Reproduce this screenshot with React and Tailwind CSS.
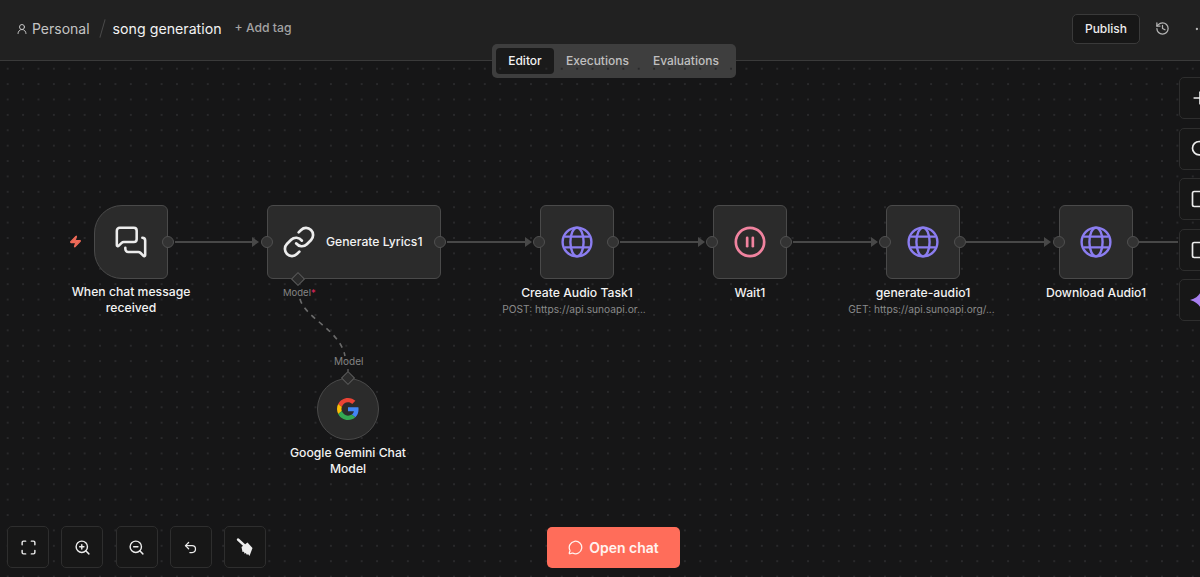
import { CirclePause, Ellipsis, History, Link, Maximize, MessageCircle, MessagesSquare, Plus, Search, Square, Undo2, UserRound, Zap, ZoomIn, ZoomOut } from "lucide-react";

function GlobeIcon() {
  return (
    <svg width="32" height="32" viewBox="0 0 32 32" fill="none" stroke="#8b7df0" strokeWidth="2.4">
      <circle cx="16" cy="16" r="14.4" />
      <ellipse cx="16" cy="16" rx="6.6" ry="14.4" />
      <path d="M3.4 10.6h25.2M3.4 21.4h25.2" />
    </svg>
  );
}

function GoogleIcon() {
  return (
    <svg width="22" height="22" viewBox="0 0 48 48">
      <path fill="#ea4335" d="M24 9.500c3.500 0 6.700 1.200 9.200 3.600l6.900-6.900C35.900 2.400 30.500 0 24 0 14.600 0 6.500 5.400 2.600 13.200l8 6.200C12.500 13.700 17.800 9.500 24 9.500z" />
      <path fill="#4285f4" d="M47 24.500c0-1.600-.1-3.100-.4-4.500H24v9h12.900c-.6 3-2.200 5.500-4.700 7.200l7.700 6C44.400 38.500 47 32 47 24.500z" />
      <path fill="#fbbc05" d="M10.500 28.600c-.5-1.400-.8-3-.8-4.600s.3-3.200.8-4.600l-8-6.200C.9 16.500 0 20.100 0 24s.9 7.500 2.600 10.800l7.900-6.200z" />
      <path fill="#34a853" d="M24 48c6.500 0 11.900-2.100 15.900-5.800l-7.700-6c-2.200 1.400-4.900 2.300-8.200 2.300-6.200 0-11.500-4.200-13.400-9.900l-8 6.200C6.500 42.600 14.600 48 24 48z" />
    </svg>
  );
}

function SparkleIcon() {
  return (
    <svg width="24" height="24" viewBox="0 0 24 24" fill="#a87ff0">
      <path d="M12 0c1.500 6 4 9.500 12 12-8 2.500-10.500 6-12 12-1.500-6-4-9.500-12-12 8-2.500 10.500-6 12-12z" />
    </svg>
  );
}

function BroomIcon() {
  return (
    <svg width="20" height="20" viewBox="0 0 20 20" fill="#ececec">
      <path d="M3 2.500l6 5.500" stroke="#ececec" strokeWidth="2.400" strokeLinecap="round" />
      <path d="M6.500 10l6-4.500 5 5.500-3 8-1.500-2-1 1-1.200-2-1.300 .7-.5-2-1.500 .3z" />
    </svg>
  );
}

function Edges() {
  const lines = [
    [175, 253],
    [447, 526],
    [620, 699],
    [793, 872],
    [966, 1045],
  ];
  return (
    <svg className="absolute left-0 top-0" width="1200" height="577" fill="none">
      {lines.map(([from, to]) => (
        <g key={from}>
          <path d={`M${from} 242H${to}`} stroke="#484848" strokeWidth="2" />
          <path d={`M${to - 1} 237l7 5-7 5z`} fill="#484848" />
        </g>
      ))}
      <path d="M1139 242H1178" stroke="#484848" strokeWidth="2" />
      <path d="M300 299C305 318 340 330 345 356" stroke="#6a6a6a" strokeWidth="1.600" strokeDasharray="5 5" />
      <path d="M348 369V374" stroke="#6a6a6a" strokeWidth="1.200" />
    </svg>
  );
}

function Handle({ left }) {
  return (
    <div
      className="absolute top-[236px] h-3 w-3 rounded-full border border-[#505050] bg-[#333]"
      style={{ left }}
    />
  );
}

function Diamond({ left, top }) {
  return (
    <div
      className="absolute h-[10px] w-[10px] rotate-45 border border-[#5a5a5a] bg-[#2b2b2b]"
      style={{ left, top }}
    />
  );
}

function Node({ left, label, sub, subClass, children }) {
  return (
    <div className="absolute top-[205px] flex w-[74px] flex-col items-center" style={{ left }}>
      <div className="flex h-[74px] w-[74px] items-center justify-center rounded-[6px] border border-[#4a4a4a] bg-[#2b2b2b]">
        {children}
      </div>
      <div className="mt-[6px] whitespace-nowrap text-[12.2px] font-medium leading-4 text-[#f2f2f2]">{label}</div>
      {sub && <div className={`mt-[1px] whitespace-nowrap text-[10.2px] leading-[14px] text-[#8a8a8a] ${subClass}`}>{sub}</div>}
    </div>
  );
}

function ToolButton({ children }) {
  return (
    <button className="flex h-[42px] w-[42px] items-center justify-center rounded-[5px] border border-[#2e2e2e] bg-[#171717] text-[#ececec]">
      {children}
    </button>
  );
}

function SideButton({ children }) {
  return (
    <button className="flex h-[42px] w-[42px] items-center justify-start rounded-[5px] border border-[#2e2e2e] bg-[#171717] pl-[10px] text-[#ececec]">
      {children}
    </button>
  );
}

export default function App() {
  return (
    <div className="relative flex h-[577px] w-[1200px] flex-col overflow-hidden bg-[#161617] font-['Inter',sans-serif]">
      <header className="flex h-[61px] shrink-0 items-center border-b border-[#3a3a3a] bg-[#212121] pb-[3px] pl-[16px]">
        <UserRound size={12} strokeWidth={2} className="text-[#c4c4c4]" />
        <span className="ml-[4px] text-[14px] text-[#c4c4c4]">Personal</span>
        <span className="ml-[12px] h-[19px] w-px rotate-[16deg] bg-[#4a4a4a]" />
        <span className="ml-[10px] text-[14.2px] text-[#f2f2f2]">song generation</span>
        <span className="ml-[13px] text-[12.2px] font-medium text-[#a3a3a3]">+ Add tag</span>
        <div className="ml-auto flex items-center pr-0">
          <button className="flex h-[30px] w-[68px] items-center justify-center rounded-[5px] border border-[#3a3a3a] bg-[#171717] text-[12px] font-medium text-[#ececec]">
            Publish
          </button>
          <History size={15} strokeWidth={2} className="ml-[15px] shrink-0 text-[#b5b5b5]" />
          <Ellipsis size={14} strokeWidth={2} className="ml-[24px] mr-[-8px] shrink-0 text-[#b5b5b5]" />
        </div>
      </header>

      <div className="absolute left-[492px] top-[44px] flex h-[34px] w-[244px] items-center rounded-[5px] bg-[#3e3e3e] pl-[4px] text-[12px] font-medium">
        <div className="flex h-[26px] w-[58px] items-center justify-center rounded-[4px] bg-[#1a1a1a] text-[#f2f2f2]">Editor</div>
        <div className="ml-[12px] text-[#c0c0c0]">Executions</div>
        <div className="ml-[24px] text-[#c0c0c0]">Evaluations</div>
      </div>

      <main className="relative flex-1 bg-[radial-gradient(#29292b_0.7px,transparent_0.8px)] bg-[size:15.400px_15.400px]" />

      <Edges />

      <Zap size={13} className="absolute left-[69px] top-[235px] fill-[#ef6a58] text-[#ef6a58]" />
      <div className="absolute left-[94px] top-[205px] flex h-[74px] w-[74px] items-center justify-center rounded-l-[28px] rounded-r-[6px] border border-[#4a4a4a] bg-[#2b2b2b] text-[#ececec]">
        <MessagesSquare size={34} strokeWidth={1.800} />
      </div>
      <div className="absolute left-[61px] top-[284px] w-[140px] text-center text-[12.2px] font-medium leading-4 text-[#f2f2f2]">
        When chat message received
      </div>

      <div className="absolute left-[267px] top-[205px] flex h-[74px] w-[174px] items-center rounded-[6px] border border-[#4a4a4a] bg-[#2b2b2b] pl-[14px] text-[#ececec]">
        <Link size={34} strokeWidth={1.900} />
        <span className="ml-[10px] whitespace-nowrap text-[12.2px] font-medium text-[#f2f2f2]">Generate Lyrics1</span>
      </div>
      <Diamond left={293} top={274} />
      <div className="absolute left-[283px] top-[287px] text-[9.500px] leading-3 text-[#848484]">
        Model<span className="text-[#e0245e]">*</span>
      </div>

      <Node left={540} label="Create Audio Task1" sub="POST: https://api.sunoapi.or..." subClass="mr-[6px]">
        <GlobeIcon />
      </Node>
      <Node left={713} label="Wait1">
        <CirclePause size={34} strokeWidth={1.900} className="text-[#f0839f]" />
      </Node>
      <Node left={886} label="generate-audio1" sub="GET: https://api.sunoapi.org/..." subClass="mr-[3px]">
        <GlobeIcon />
      </Node>
      <Node left={1059} label="Download Audio1">
        <GlobeIcon />
      </Node>

      <Handle left={162} />
      <Handle left={261} />
      <Handle left={434} />
      <Handle left={533} />
      <Handle left={607} />
      <Handle left={706} />
      <Handle left={780} />
      <Handle left={879} />
      <Handle left={954} />
      <Handle left={1053} />
      <Handle left={1127} />

      <div className="absolute left-[334px] top-[355px] text-[10px] leading-3 text-[#848484]">Model</div>
      <div className="absolute left-[317px] top-[378px] flex h-[62px] w-[62px] items-center justify-center rounded-full border border-[#4a4a4a] bg-[#2b2b2b]">
        <GoogleIcon />
      </div>
      <Diamond left={343} top={373} />
      <div className="absolute left-[278px] top-[445px] w-[140px] text-center text-[12.2px] font-medium leading-4 text-[#f2f2f2]">
        Google Gemini Chat Model
      </div>

      <div className="absolute left-[1179px] top-[77px] flex flex-col gap-[8.500px]">
        <SideButton><Plus size={20} className="shrink-0" /></SideButton>
        <SideButton><Search size={20} className="shrink-0" /></SideButton>
        <SideButton><Square size={20} className="shrink-0" /></SideButton>
        <SideButton><Square size={20} className="shrink-0" /></SideButton>
        <SideButton><SparkleIcon /></SideButton>
      </div>

      <div className="absolute bottom-[9px] left-[7px] flex gap-[12.250px]">
        <ToolButton><Maximize size={17} /></ToolButton>
        <ToolButton><ZoomIn size={17} /></ToolButton>
        <ToolButton><ZoomOut size={17} /></ToolButton>
        <ToolButton><Undo2 size={15} /></ToolButton>
        <ToolButton><BroomIcon /></ToolButton>
      </div>

      <button className="absolute left-[547px] top-[527px] flex h-[41px] w-[133px] items-center justify-center gap-[6px] rounded-[5px] bg-[#ff6d5a] text-[14px] font-semibold text-[#fff3ef]">
        <MessageCircle size={15} strokeWidth={2} />
        Open chat
      </button>
    </div>
  );
}
